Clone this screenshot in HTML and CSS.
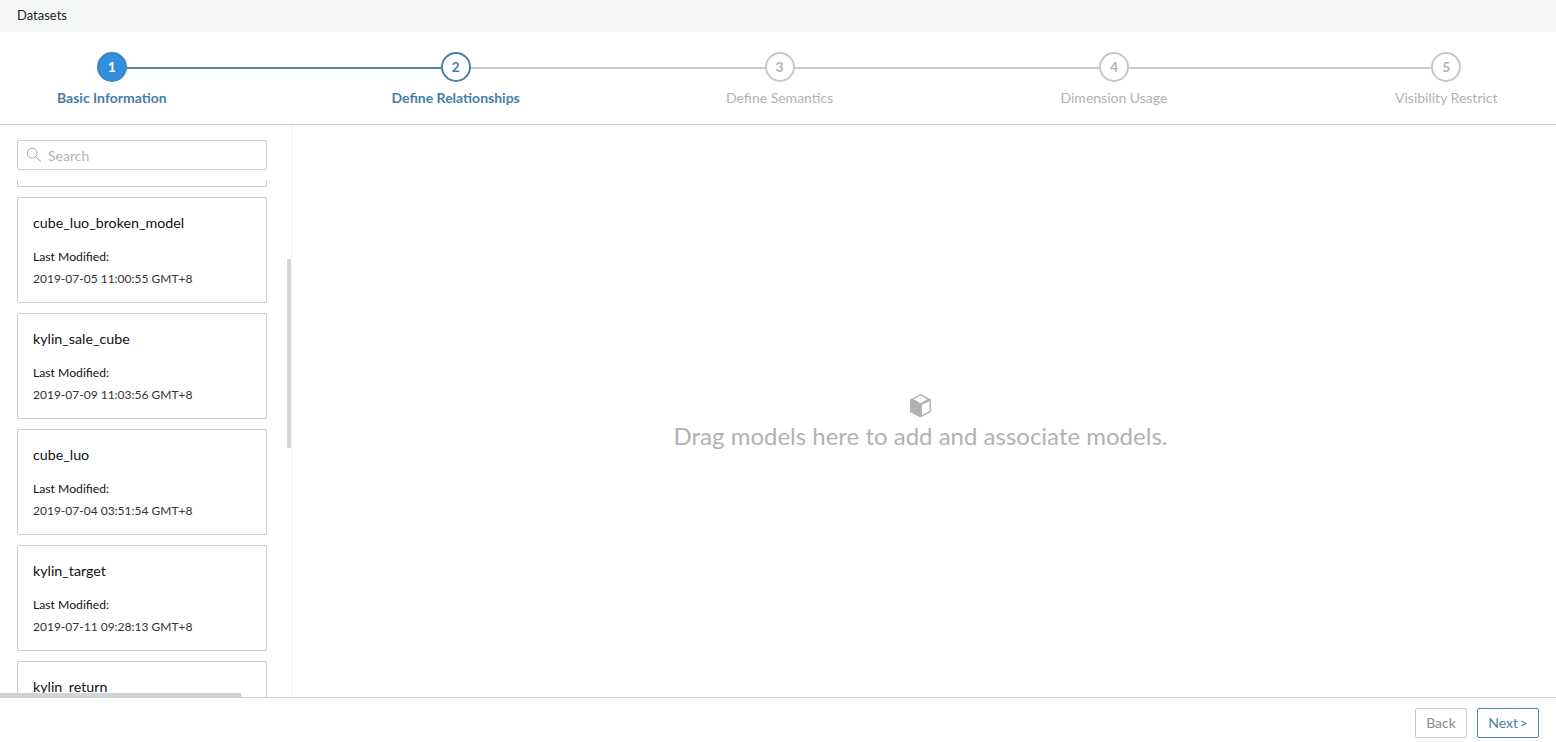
FILE: index.html
```html
<!DOCTYPE html>
<html lang="en">
<head>
<meta charset="utf-8">
<title>Datasets</title>
<link rel="stylesheet" href="styles.css">
</head>
<body>
<div class="app">
  <header class="topbar">Datasets</header>
  <nav class="wizard">
    <div class="rail"><div class="rail-done"></div></div>
    <ol class="steps">
      <li class="step"><div class="step-body current"><span class="dot">1</span><span class="step-label">Basic Information</span></div></li>
      <li class="step"><div class="step-body active"><span class="dot">2</span><span class="step-label">Define Relationships</span></div></li>
      <li class="step"><div class="step-body"><span class="dot">3</span><span class="step-label">Define Semantics</span></div></li>
      <li class="step"><div class="step-body"><span class="dot">4</span><span class="step-label">Dimension Usage</span></div></li>
      <li class="step"><div class="step-body"><span class="dot">5</span><span class="step-label">Visibility Restrict</span></div></li>
    </ol>
  </nav>
  <main class="workspace">
    <aside class="sidebar">
      <div class="search">
        <svg class="search-icon" width="16" height="16" viewBox="0 0 16 16" fill="none" stroke="#aaa"><circle cx="6.2" cy="6.2" r="4.9"/><path d="M9.800 9.800l5.200 4.900"/></svg>
        <span>Search</span>
      </div>
      <div class="models">
        <article class="card card-cut"></article>
        <article class="card"><h3 class="name">cube_luo_broken_model</h3><p class="meta">Last Modified:</p><p class="meta date">2019-07-05 11:00:55 GMT+8</p></article>
        <article class="card"><h3 class="name">kylin_sale_cube</h3><p class="meta">Last Modified:</p><p class="meta date">2019-07-09 11:03:56 GMT+8</p></article>
        <article class="card"><h3 class="name">cube_luo</h3><p class="meta">Last Modified:</p><p class="meta date">2019-07-04 03:51:54 GMT+8</p></article>
        <article class="card"><h3 class="name">kylin_target</h3><p class="meta">Last Modified:</p><p class="meta date">2019-07-11 09:28:13 GMT+8</p></article>
        <article class="card"><h3 class="name">kylin_return</h3></article>
      </div>
      <div class="scroll-y"></div>
      <div class="scroll-x"></div>
    </aside>
    <section class="canvas">
      <svg class="cube" width="22" height="24" viewBox="0 0 22 24"><path fill="#b2b2b2" fill-rule="evenodd" d="M10.500 0L21 5.400v12.700L10.500 23.500 0 18.100V5.400zM10.500 1.500L3.700 5.300l6.800 3.900 6.800-3.900zM19.500 7.200l-7.500 3.900v9.900l7.500-3.900z"/></svg>
      <p class="hint">Drag models here to add and associate models.</p>
    </section>
  </main>
  <footer class="actions">
    <button class="btn">Back</button>
    <button class="btn btn-next">Next <span class="chevron">&gt;</span></button>
  </footer>
</div>
</body>
</html>
```
FILE: styles.css
```css
* { box-sizing: border-box; }
body { margin: 0; background: #fff; font-family: Lato, "Liberation Sans", sans-serif; font-size: 14px; color: #222; }
.app { display: flex; flex-direction: column; height: 742px; overflow: hidden; }
.topbar { flex: 0 0 32px; padding-left: 17px; background: #f5f7f7; font-size: 13px; line-height: 31px; }

.wizard { flex: 0 0 93px; display: grid; padding: 20px 0 0 57px; border-bottom: 1px solid #ccc; }
.rail { grid-area: 1 / 1; width: 1335px; height: 2px; margin: 15px 0 0 55px; background: #ccc; }
.rail-done { width: 344px; height: 2px; background: #53849a; }
.steps { grid-area: 1 / 1; display: flex; margin: 0; padding: 0; list-style: none; }
.step { flex: 0 0 334.5px; }
.step-body { display: flex; flex-direction: column; align-items: center; width: fit-content; color: #b2b2b2; }
.dot { width: 30px; height: 30px; border: 2px solid #c8c8c8; border-radius: 50%; background: #fff; line-height: 26px; text-align: center; font-weight: 700; }
.step-label { margin-top: 7px; line-height: 18px; white-space: nowrap; }
.active, .current { color: #4580a5; font-weight: 700; }
.active .dot { border-color: #4580a5; }
.current .dot { border-color: #3986c8; background: #318fdd; color: #fff; }

.workspace { flex: 1 1 0; min-height: 0; display: flex; }
.sidebar { position: relative; flex: 0 0 292px; display: flex; flex-direction: column; padding: 15px 24px 0 17px; border-right: 1px solid #f1f3f3; overflow: hidden; }
.search { flex: 0 0 30px; display: flex; align-items: center; gap: 6px; width: 250px; padding-left: 8px; border: 1px solid #ccc; border-radius: 2px; color: #b2b2b2; }
.models { flex: 1 1 0; min-height: 0; display: flex; flex-direction: column; gap: 10px; width: 250px; margin-top: 10px; overflow: hidden; }
.card { flex: 0 0 106px; padding: 15px 15px 0; border: 1px solid #ccc; border-radius: 2px; background: #fff; }
.card-cut { flex-basis: 7px; border-top: 0; border-radius: 0 0 2px 2px; padding: 0; }
.name { margin: 0 0 13px; font-size: 14.25px; font-weight: 400; line-height: 20px; color: #111; }
.meta { margin: 0; font-size: 12.2px; line-height: 22px; color: #111; }
.date { font-size: 12px; color: #333; }
.scroll-y { position: absolute; left: 287px; top: 134px; width: 4px; height: 189px; background: #d3d7d8; }
.scroll-x { position: absolute; left: 0; bottom: 0; width: 241px; height: 4px; background: #d0d4d4; }

.canvas { flex: 1; display: flex; flex-direction: column; align-items: center; padding: 269px 7px 0 0; }
.hint { margin: 3px 0 0; font-size: 24px; line-height: 30px; color: #b2b2b2; }
.actions { flex: 0 0 45px; display: flex; justify-content: flex-end; gap: 10px; padding: 10px 17px 0 0; border-top: 1px solid #ccc; }
.btn { width: 52px; height: 30px; padding: 0 0 2px; border: 1px solid #ccc; border-radius: 2px; background: #fff; color: #8c8c8c; font: 14px Lato, sans-serif; }
.btn-next { width: 62px; border-color: #5487a5; color: #4580a5; }
.chevron { margin-left: -2px; font-size: 14px; }
```
